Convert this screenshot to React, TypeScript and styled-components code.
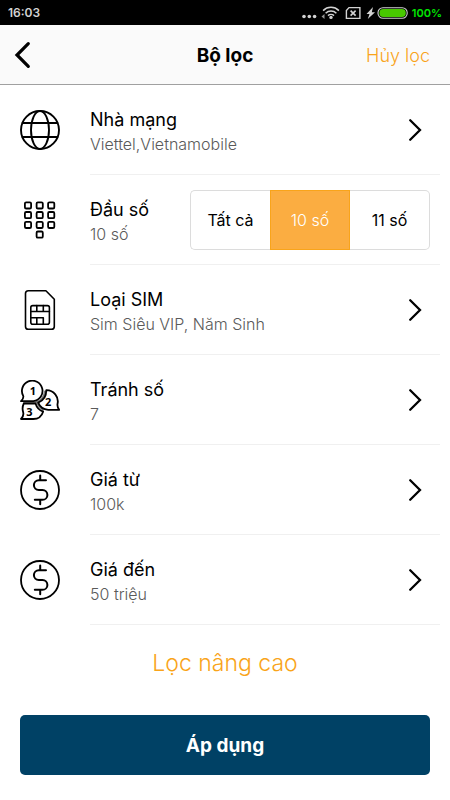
import React, { useState } from "react";
import styled, { createGlobalStyle } from "styled-components";

const GlobalStyle = createGlobalStyle`
  *, *::before, *::after { box-sizing: border-box; }
  body {
    margin: 0;
    background: #fff;
    color: #000;
    font-family: Inter, Roboto, "Noto Sans", sans-serif;
  }
  button, input { font: inherit; color: inherit; }
  button { background: none; border: 0; padding: 0; cursor: pointer; }
`;

const Screen = styled.div`
  min-height: 100vh;
  display: flex;
  flex-direction: column;
`;

const StatusBar = styled.div`
  height: 25px;
  padding: 0 8px;
  background: #000;
  color: #d2d2d2;
  display: flex;
  align-items: center;
  justify-content: space-between;
  font-size: 12px;
  font-weight: 600;
  line-height: 26px;
`;

const StatusIcons = styled.div`
  display: flex;
  align-items: center;
  gap: 4px;
  svg { display: block; }
`;

const BatteryLevel = styled.span`
  color: #00e800;
  font-size: 11px;
`;

const Header = styled.header`
  height: 60px;
  padding: 0 20px 0 12px;
  background: #fafafa;
  border-bottom: 1px solid #a0a0a0;
  display: grid;
  grid-template-columns: 1fr auto 1fr;
  align-items: center;
`;

const BackButton = styled.button`
  justify-self: start;
  display: flex;
`;

const Title = styled.h1`
  margin: 0 0 0 8px;
  padding-top: 2px;
  font-size: 19px;
  line-height: 24px;
  font-weight: 700;
`;

const ClearButton = styled.button`
  justify-self: end;
  padding-top: 2px;
  color: #f9a41a;
  font-size: 18px;
  line-height: 24px;
  font-weight: 300;
`;

const FilterList = styled.ul`
  list-style: none;
  margin: 0;
  padding: 0 10px 0 20px;
`;

const FilterItem = styled.li`
  display: flex;
`;

const IconCell = styled.span`
  flex: 0 0 70px;
  display: flex;
  align-items: center;
`;

const RowBody = styled.span<{ $end: number }>`
  flex: 1;
  min-width: 0;
  height: 90px;
  padding-right: ${(p) => p.$end}px;
  border-bottom: 1px solid #f0f0f0;
  display: flex;
  align-items: center;
  justify-content: space-between;
`;

const RowButton = styled.button`
  flex: 1;
  display: flex;
  text-align: left;
`;

const Texts = styled.span`
  padding-top: 4px;
  display: flex;
  flex-direction: column;
`;

const Label = styled.span`
  font-size: 18px;
  line-height: 25px;
  font-weight: 400;
`;

const Value = styled.span`
  font-size: 16px;
  line-height: 24px;
  font-weight: 350;
  color: #5a5a5a;
`;

const Segments = styled.fieldset`
  margin: 0;
  padding: 0;
  border: 0;
  width: 240px;
  height: 60px;
  display: grid;
  grid-template-columns: repeat(3, 1fr);
`;

const Segment = styled.label<{ $active: boolean }>`
  display: flex;
  align-items: center;
  justify-content: center;
  font-size: 16px;
  font-weight: ${(p) => (p.$active ? 350 : 400)};
  color: ${(p) => (p.$active ? "#fff" : "#000")};
  background: ${(p) => (p.$active ? "#fbad41" : "#fff")};
  border: 1px solid ${(p) => (p.$active ? "#f9a41a" : "#dcdcdc")};
  cursor: pointer;
  &:first-of-type { border-right: 0; border-radius: 5px 0 0 5px; }
  &:last-of-type { border-left: 0; border-radius: 0 5px 5px 0; }
`;

const HiddenRadio = styled.input`
  appearance: none;
  width: 0;
  height: 0;
  margin: 0;
`;

const Footer = styled.footer`
  padding: 21px 20px;
  display: flex;
  flex-direction: column;
  align-items: stretch;
  gap: 35px;
`;

const AdvancedButton = styled.button`
  align-self: center;
  color: #f9a41a;
  font-size: 23px;
  line-height: 34px;
  font-weight: 350;
`;

const ApplyButton = styled.button`
  height: 60px;
  border-radius: 5px;
  background: #004165;
  color: #fff;
  font-size: 19px;
  font-weight: 700;
`;

const Drawing = ({ children, width = 1.7 }: { children: React.ReactNode; width?: number }) => (
  <svg width="40" height="40" viewBox="0 0 40 40" fill="none" stroke="#000" strokeWidth={width}
    strokeLinecap="round" strokeLinejoin="round" aria-hidden="true">
    {children}
  </svg>
);

const GlobeIcon = () => (
  <Drawing width={1.9}>
    <circle cx="20" cy="20" r="19" />
    <ellipse cx="20" cy="20" rx="9" ry="19" />
    <path d="M2.6 13h34.8M2.6 27h34.8" />
  </Drawing>
);

const keys = [
  [8, 5.4], [19.7, 5.4], [31.2, 5.4],
  [8, 15.1], [19.7, 15.1], [31.2, 15.1],
  [8, 24.9], [19.7, 24.9], [31.2, 24.9],
  [19.7, 34.6],
];

const KeypadIcon = () => (
  <Drawing width={1.8}>
    {keys.map(([x, y]) => (
      <rect key={`${x}-${y}`} x={x - 3.1} y={y - 3.1} width="6.2" height="6.2" rx="1.3" />
    ))}
  </Drawing>
);

const SimIcon = () => (
  <Drawing width={1.6}>
    <path d="M8.3.8h17.6l8.4 8.5v27.1a2.8 2.8 0 0 1-2.8 2.8H8.3a2.8 2.8 0 0 1-2.8-2.8V3.6A2.8 2.8 0 0 1 8.3.8Z" />
    <rect x="10.8" y="15.6" width="18.6" height="18.6" rx="2" />
    <path d="M10.8 21.5h18.6M16.8 15.6v5.9M23.3 15.6v5.9M10.8 27.8h12.5v6.4M16.8 27.8v6.4" />
  </Drawing>
);

const Digit = styled.text`
  font-family: "Open Sans", "Noto Sans", sans-serif;
  font-size: 11px;
  font-weight: 700;
  fill: #000;
  stroke: none;
  text-anchor: middle;
`;

const BubblesIcon = () => (
  <Drawing width={1.8}>
    <path d="M4 22.4h12q7.5-2 9-11" stroke="#777" strokeWidth="1.8" />
    <path d="M16.5 22q2.5 5 6.5 8" stroke="#777" strokeWidth="1.8" />
    <path d="M1 21.2c2-1.7 2.6-3 2.3-5.1A10.3 10.3 0 1 1 13.4 21.2Z" />
    <path d="M26.3 10.2a11.3 11.3 0 0 1 11.2 13.9c-.3 2.4.3 4 1.7 5.7H28.2a11.4 11.4 0 0 1-10-7.2c4.9-2 8.1-6.5 8.1-12.4Z" />
    <path d="M3.8 23.5c-1.2 2.4-1.5 5.7-.7 8.4.8 3-.1 5.2-2.1 7.1h12.3c4.6 0 8.3-2.5 9.8-7.3-3.5-1.3-6.3-4-7.6-8.2Z" />
    <Digit x="12.8" y="15.4">1</Digit>
    <Digit x="28.1" y="26.3">2</Digit>
    <Digit x="9.4" y="36.4">3</Digit>
  </Drawing>
);

const DollarIcon = () => (
  <Drawing width={2}>
    <circle cx="20" cy="20" r="19" strokeWidth="1.8" />
    <path d="M20.2 5.6v4.5M26 10.2h-7.2a4.9 4.9 0 0 0 0 9.8h3.7a4.9 4.9 0 0 1 0 9.8h-7.7M20.2 29.8v4.5" />
  </Drawing>
);

const Chevron = () => (
  <svg width="16" height="24" viewBox="0 0 16 24" fill="none" stroke="#000" strokeWidth="2.3"
    strokeLinecap="round" strokeLinejoin="miter" aria-hidden="true">
    <path d="M2.2 2.2l9.8 9.8-9.8 9.8" />
  </svg>
);

const BackIcon = () => (
  <svg width="20" height="28" viewBox="0 0 20 28" fill="none" stroke="#000" strokeWidth="3.2"
    strokeLinecap="round" aria-hidden="true">
    <path d="M16.3 2.7L5 14l11.3 11.3" />
  </svg>
);

const StatusDrawing = () => (
  <svg width="106" height="16" viewBox="0 0 106 16" fill="none" stroke="#d2d2d2" aria-hidden="true">
    <g fill="#d2d2d2" stroke="none">
      <circle cx="2" cy="11.5" r="1.8" />
      <circle cx="7.3" cy="11.5" r="1.8" />
      <circle cx="12.6" cy="11.5" r="1.8" />
      <circle cx="29" cy="12.4" r="1.7" />
      <path d="M71 2l-6.5 7h3l-1.7 5L73 7.3h-3.2L71 2Z" />
      <path d="M22.5 9v5L19.5 11.5Z" opacity=".7" />
    </g>
    <path d="M21.1 5.6a11.2 11.2 0 0 1 15.8 0M23.6 8.2a7.6 7.6 0 0 1 10.8 0M26 10.6a4.4 4.4 0 0 1 6 0" strokeWidth="1.5" />
    <path d="M47 2.6h10.9v10.8H44.4V5.4Z" strokeWidth="1.4" />
    <path d="M48.6 5.6l5 5M53.6 5.6l-5 5" strokeWidth="1.6" />
    <rect x="76" y="2.7" width="29.2" height="10.6" rx="5" strokeWidth="1.1" />
    <rect x="77.4" y="4.1" width="26.4" height="7.8" rx="3.9" fill="#48c800" stroke="none" />
  </svg>
);

interface Filter {
  label: string;
  value: string;
  Icon: () => React.ReactElement;
  segmented?: boolean;
}

const filters: Filter[] = [
  { label: "Nhà mạng", value: "Viettel,Vietnamobile", Icon: GlobeIcon },
  { label: "Đầu số", value: "10 số", Icon: KeypadIcon, segmented: true },
  { label: "Loại SIM", value: "Sim Siêu VIP, Năm Sinh", Icon: SimIcon },
  { label: "Tránh số", value: "7", Icon: BubblesIcon },
  { label: "Giá từ", value: "100k", Icon: DollarIcon },
  { label: "Giá đến", value: "50 triệu", Icon: DollarIcon },
];

const options = ["Tất cả", "10 số", "11 số"];

export default function App() {
  const [digits, setDigits] = useState("10 số");

  return (
    <Screen>
      <GlobalStyle />
      <StatusBar>
        <span>16:03</span>
        <StatusIcons>
          <StatusDrawing />
          <BatteryLevel>100%</BatteryLevel>
        </StatusIcons>
      </StatusBar>
      <Header>
        <BackButton type="button" aria-label="Quay lại"><BackIcon /></BackButton>
        <Title>Bộ lọc</Title>
        <ClearButton type="button">Hủy lọc</ClearButton>
      </Header>
      <main>
        <FilterList>
          {filters.map(({ label, value, Icon, segmented }) => (
            <FilterItem key={label}>
              {segmented ? (
                <>
                  <IconCell><Icon /></IconCell>
                  <RowBody $end={10}>
                    <Texts>
                      <Label>{label}</Label>
                      <Value>{digits}</Value>
                    </Texts>
                    <Segments aria-label={label}>
                      {options.map((option) => (
                        <Segment key={option} $active={option === digits}>
                          <HiddenRadio
                            type="radio"
                            name="digits"
                            value={option}
                            checked={option === digits}
                            onChange={() => setDigits(option)}
                          />
                          {option}
                        </Segment>
                      ))}
                    </Segments>
                  </RowBody>
                </>
              ) : (
                <RowButton type="button">
                  <IconCell><Icon /></IconCell>
                  <RowBody $end={16}>
                    <Texts>
                      <Label>{label}</Label>
                      <Value>{value}</Value>
                    </Texts>
                    <Chevron />
                  </RowBody>
                </RowButton>
              )}
            </FilterItem>
          ))}
        </FilterList>
      </main>
      <Footer>
        <AdvancedButton type="button">Lọc nâng cao</AdvancedButton>
        <ApplyButton type="button">Áp dụng</ApplyButton>
      </Footer>
    </Screen>
  );
}
